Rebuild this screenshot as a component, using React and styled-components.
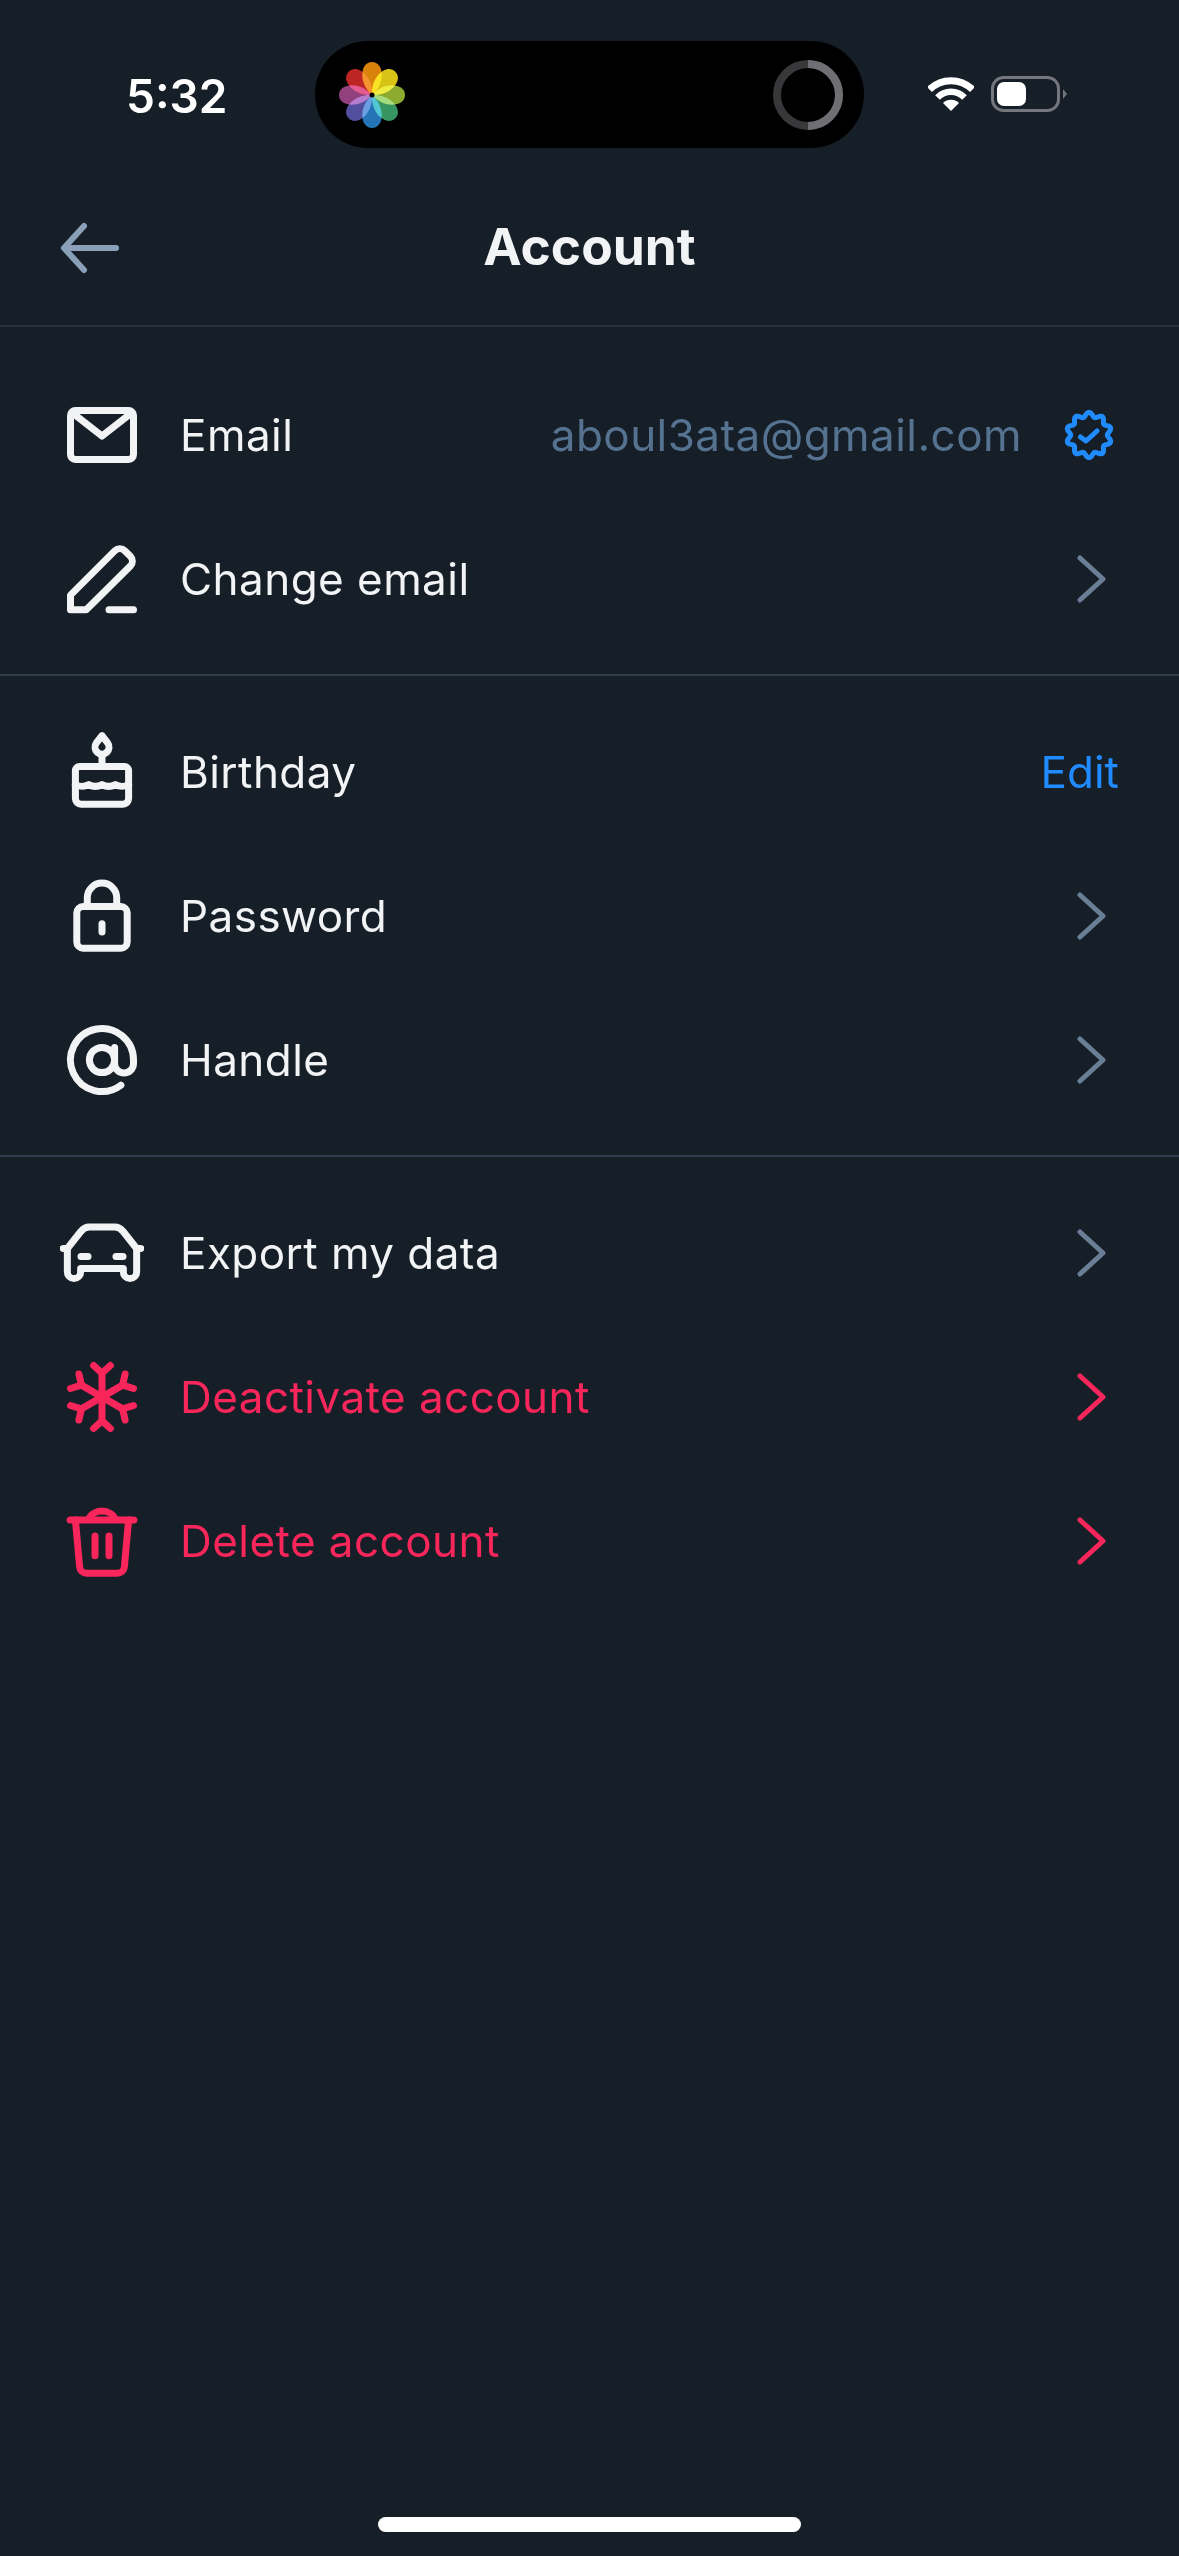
import React from 'react';
import styled, { createGlobalStyle } from 'styled-components';

const GlobalStyle = createGlobalStyle`
  html, body {
    margin: 0;
    padding: 0;
    background: #161e27;
  }
`;

const Page = styled.div`
  width: 1179px;
  height: 2556px;
  display: flex;
  flex-direction: column;
  overflow: hidden;
  background: #161e27;
  color: #f1f3f5;
  font-family: Inter, 'Noto Sans', sans-serif;
`;

const StatusBar = styled.div`
  display: grid;
  grid-template-columns: 315px 549px 1fr;
  height: 147px;
  padding-top: 41px;
  box-sizing: border-box;
`;

const Clock = styled.div`
  padding-left: 126px;
  font-size: 46px;
  font-weight: 600;
  line-height: 110px;
  color: #fff;
`;

const Island = styled.div`
  height: 107px;
  border-radius: 53px;
  background: #000;
  display: flex;
  align-items: center;
  justify-content: space-between;
  padding: 0 20px 0 23px;
`;

const StatusIcons = styled.div`
  display: flex;
  align-items: center;
  gap: 17px;
  padding-left: 64px;
  height: 106px;
`;

const Petal = styled.path`
  mix-blend-mode: screen;
`;

const Header = styled.header`
  box-sizing: border-box;
  height: 180px;
  border-bottom: 2px solid #263240;
  position: relative;
  display: flex;
  align-items: center;
  justify-content: center;
  padding-top: 20px;
`;

const BackButton = styled.div`
  position: absolute;
  left: 60px;
  top: 72px;
  width: 60px;
  height: 58px;
`;

const Title = styled.h1`
  margin: 0;
  font-size: 51.5px;
  font-weight: 700;
  color: #f1f3f5;
`;

const Group = styled.section`
  padding: ${(p) => (p.$first ? '36px' : '24px')} 0 23px;
  border-bottom: ${(p) => (p.$last ? 'none' : '2px solid #2e3b4a')};
`;

const Row = styled.div`
  height: 144px;
  display: flex;
  align-items: center;
  padding: 0 60px;
  color: ${(p) => (p.$danger ? '#f9265b' : '#f1f3f5')};
`;

const Glyph = styled.svg`
  width: 84px;
  height: 84px;
  flex: none;
  margin-right: 36px;
  fill: none;
  stroke: currentColor;
  stroke-width: 2;
  stroke-linecap: round;
  stroke-linejoin: round;
`;

const Label = styled.span`
  flex: 1;
  font-size: 44px;
  font-weight: 400;
  letter-spacing: 0.45px;
`;

const Value = styled.span`
  font-size: 44px;
  color: #557390;
  letter-spacing: 0.45px;
  margin-right: 41px;
`;

const EditLink = styled.span`
  font-size: 44px;
  color: #208bfe;
`;

const Badge = styled.svg`
  width: 52px;
  height: 52px;
  flex: none;
  margin-right: 4px;
  fill: none;
  stroke: #208bfe;
  stroke-width: 5;
  stroke-linecap: round;
  stroke-linejoin: round;
`;

const Chevron = styled.svg`
  width: 48px;
  height: 48px;
  flex: none;
  fill: none;
  stroke: ${(p) => (p.$danger ? '#f9265b' : '#6a7f96')};
  stroke-width: 5;
  stroke-linecap: round;
  stroke-linejoin: round;
`;

const HomeBar = styled.div`
  width: 423px;
  height: 15px;
  border-radius: 8px;
  background: #fff;
  margin: auto auto 24px;
`;

const PETALS = ['#d9820c', '#d8c416', '#8dab30', '#379562', '#2474b6', '#52509e', '#93407e', '#bd2424'];

const PhotosLogo = () => (
  <svg width="68" height="68" viewBox="-34 -34 68 68">
    {PETALS.map((c, i) => (
      <Petal
        key={c}
        d="M0 0C-14-12-12-33 0-33C12-33 14-12 0 0Z"
        fill={c}
        transform={`rotate(${i * 45})`}
      />
    ))}
    <circle r="2.5" fill="#000" />
  </svg>
);

const ProgressRing = () => (
  <svg width="72" height="72" viewBox="0 0 72 72" fill="none" strokeWidth="8">
    <circle cx="36" cy="36" r="31" stroke="#38383a" />
    <path d="M36 5A31 31 0 0 1 36 67" stroke="#6e6e73" />
  </svg>
);

const WifiIcon = () => (
  <svg width="46" height="36" viewBox="-23 -35 46 36" fill="none" stroke="#fff">
    <path d="M-21.5-21.5A30.5 30.5 0 0 1 21.5-21.5" strokeWidth="7" />
    <path d="M-13.5-13.5A19 19 0 0 1 13.5-13.5" strokeWidth="6.5" />
    <path d="M0 0L-8-8A11.3 11.3 0 0 1 8-8Z" fill="#fff" stroke="none" />
  </svg>
);

const BatteryIcon = () => (
  <svg width="76" height="36" viewBox="0 0 76 36" fill="none">
    <rect x="1.5" y="1.5" width="66" height="33" rx="11" stroke="#74777d" strokeWidth="3" />
    <rect x="6" y="6" width="29" height="24" rx="7" fill="#fff" />
    <path d="M72 13L76 18L72 23Z" fill="#74777d" />
  </svg>
);

const MailIcon = () => (
  <Glyph viewBox="0 0 24 24">
    <rect x="3" y="5" width="18" height="14" rx="1.4" />
    <path d="M3.4 5.6L12 12.3L20.6 5.6" />
  </Glyph>
);

const PencilIcon = () => (
  <Glyph viewBox="0 0 24 24">
    <path d="M3 20.8V16.6L15.7 3.9a2 2 0 0 1 2.8 0L20.1 5.5a2 2 0 0 1 0 2.8L7.5 20.8Z" />
    <path d="M14 20.8H21" />
  </Glyph>
);

const CakeIcon = () => (
  <Glyph viewBox="0 0 24 24">
    <path d="M12 1.6L13.6 3.7a2 2 0 1 1-3.2 0Z" />
    <path d="M12 7.2V10" />
    <path d="M5.6 10.4H18.4a1.2 1.2 0 0 1 1.2 1.2V19.6a1.6 1.6 0 0 1-1.6 1.6H6a1.6 1.6 0 0 1-1.6-1.6V11.6a1.2 1.2 0 0 1 1.2-1.2Z" />
    <path d="M4.4 15.6c1.5.7 2.4.7 3.8 0c1.3.7 2.5.7 3.8 0c1.3.7 2.5.7 3.8 0c1.4.7 2.3.7 3.8 0" />
  </Glyph>
);

const LockIcon = () => (
  <Glyph viewBox="0 0 24 24">
    <rect x="4.8" y="9.3" width="14.4" height="11.9" rx="1.8" />
    <path d="M7.8 9.3V6.8a4.2 4.2 0 0 1 8.4 0V9.3" />
    <path d="M12 14.2V16.6" />
  </Glyph>
);

const AtIcon = () => (
  <Glyph viewBox="0 0 24 24">
    <circle cx="12" cy="12" r="3.6" />
    <path d="M15.6 8.4V13a2.7 2.7 0 0 0 5.4 0V12a9 9 0 1 0-3.6 7.2" />
  </Glyph>
);

const CarIcon = () => (
  <Glyph viewBox="0 0 24 24">
    <path d="M8.4 4.6H15.6a3 3 0 0 1 2.4 1.2L21.9 10.7V17.4a1.9 1.9 0 0 1-3.8 0V16.4H5.9V17.4a1.9 1.9 0 0 1-3.8 0V10.7L6 5.8a3 3 0 0 1 2.4-1.2Z" />
    <path d="M2.1 10.7H.9M21.9 10.7H23.1" />
    <path d="M6 13H8M16 13H18" />
  </Glyph>
);

const SnowIcon = () => (
  <Glyph viewBox="0 0 24 24">
    {[0, 60, 120].map((deg) => (
      <g key={deg} transform={`rotate(${deg} 12 12)`}>
        <path d="M12 5.2V18.8" />
        <path d="M9.6 3L12 5.2L14.4 3" />
        <path d="M9.6 21L12 18.8L14.4 21" />
      </g>
    ))}
  </Glyph>
);

const TrashIcon = () => (
  <Glyph viewBox="0 0 24 24">
    <path d="M2.9 6H21.1" />
    <path d="M8.2 5.8a4 3.4 0 0 1 7.6 0" />
    <path d="M4.4 6L5.6 19.3a2 2 0 0 0 2 1.9H16.4a2 2 0 0 0 2-1.9L19.6 6" />
    <path d="M10 10.6V16.2M14 10.6V16.2" />
  </Glyph>
);

// scalloped seal, ten bumps round the check mark
const sealPath = () => {
  const pts = [];
  for (let i = 0; i < 120; i++) {
    const a = (i / 120) * Math.PI * 2;
    const r = 20.5 + 2.2 * Math.cos(a * 10);
    pts.push(`${(26 + r * Math.sin(a)).toFixed(2)} ${(26 - r * Math.cos(a)).toFixed(2)}`);
  }
  return `M${pts.join('L')}Z`;
};

const VerifiedBadge = () => (
  <Badge viewBox="0 0 52 52">
    <path d={sealPath()} />
    <path d="M17.5 28L23 32L34 22" />
  </Badge>
);

const RowChevron = ({ danger }) => (
  <Chevron viewBox="0 0 48 48" $danger={danger}>
    <path d="M9 3L32 24L9 45" />
  </Chevron>
);

export default function App() {
  return (
    <Page>
      <GlobalStyle />
      <StatusBar>
        <Clock>5:32</Clock>
        <Island>
          <PhotosLogo />
          <ProgressRing />
        </Island>
        <StatusIcons>
          <WifiIcon />
          <BatteryIcon />
        </StatusIcons>
      </StatusBar>

      <Header>
        <BackButton>
          <svg
            width="60"
            height="58"
            viewBox="0 0 60 58"
            fill="none"
            stroke="#8aa0b8"
            strokeWidth="6"
            strokeLinecap="round"
            strokeLinejoin="round"
          >
            <path d="M56 29H6" />
            <path d="M24 7L4 29L24 51" />
          </svg>
        </BackButton>
        <Title>Account</Title>
      </Header>

      <Group $first>
        <Row>
          <MailIcon />
          <Label>Email</Label>
          <Value>aboul3ata@gmail.com</Value>
          <VerifiedBadge />
        </Row>
        <Row>
          <PencilIcon />
          <Label>Change email</Label>
          <RowChevron />
        </Row>
      </Group>

      <Group>
        <Row>
          <CakeIcon />
          <Label>Birthday</Label>
          <EditLink>Edit</EditLink>
        </Row>
        <Row>
          <LockIcon />
          <Label>Password</Label>
          <RowChevron />
        </Row>
        <Row>
          <AtIcon />
          <Label>Handle</Label>
          <RowChevron />
        </Row>
      </Group>

      <Group $last>
        <Row>
          <CarIcon />
          <Label>Export my data</Label>
          <RowChevron />
        </Row>
        <Row $danger>
          <SnowIcon />
          <Label>Deactivate account</Label>
          <RowChevron danger />
        </Row>
        <Row $danger>
          <TrashIcon />
          <Label>Delete account</Label>
          <RowChevron danger />
        </Row>
      </Group>

      <HomeBar />
    </Page>
  );
}
